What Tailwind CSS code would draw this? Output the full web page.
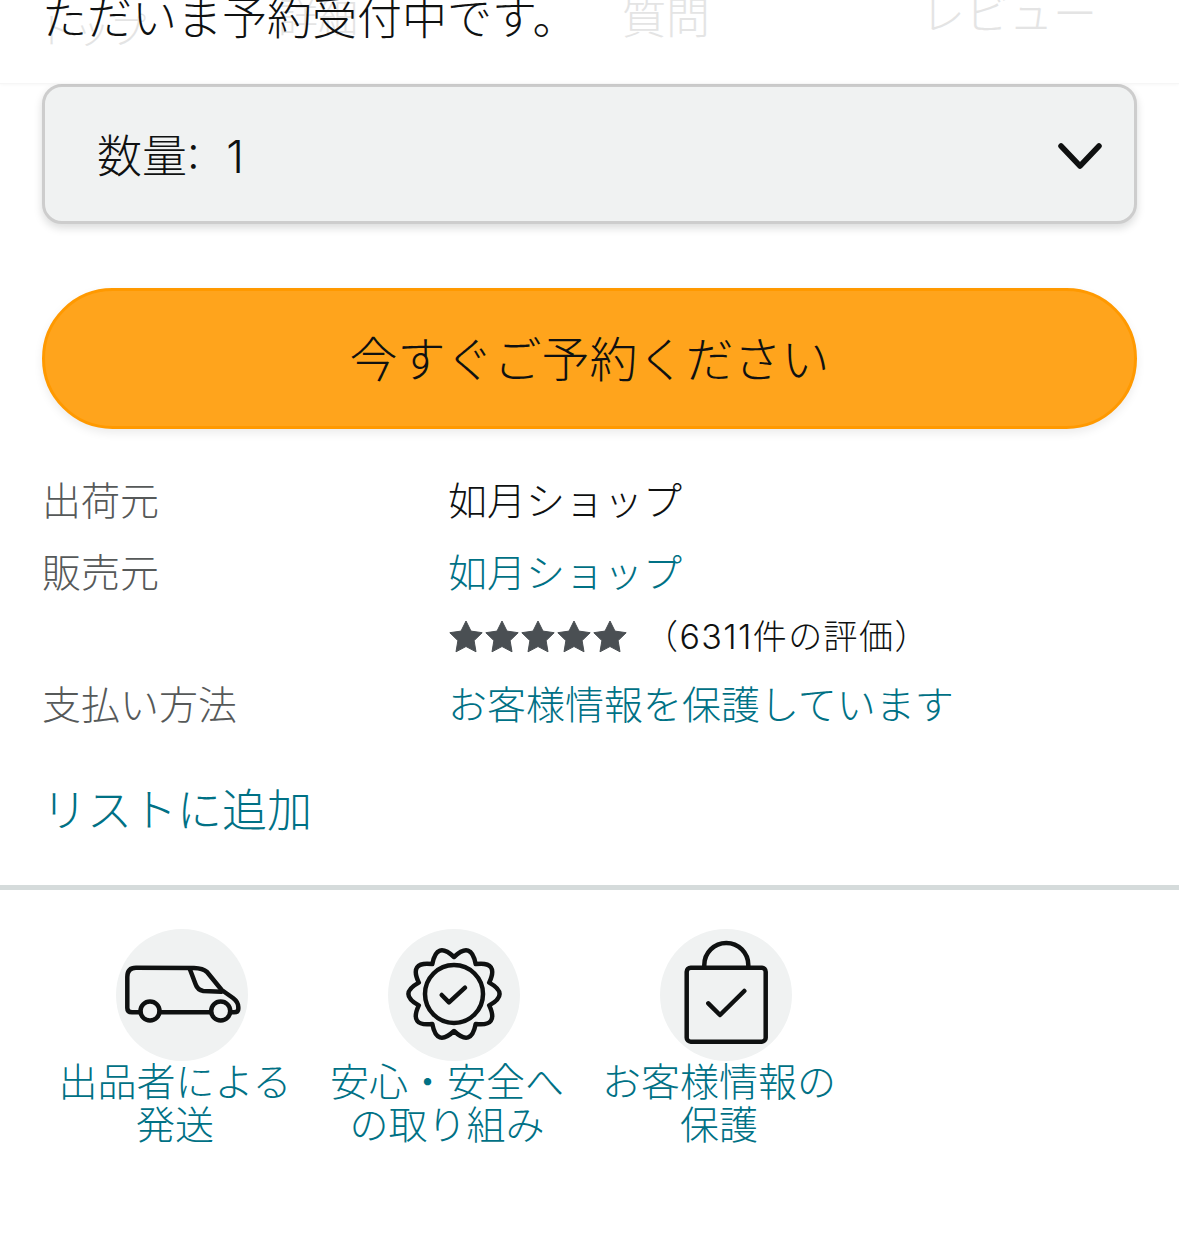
<!DOCTYPE html>
<html lang="ja">
<head>
  <meta charset="UTF-8">
  <meta name="viewport" content="width=device-width, initial-scale=1.0">
  <title>商品詳細</title>
  <script src="https://cdn.jsdelivr.net/npm/@tailwindcss/browser@4"></script>
</head>
<body class="bg-white font-['Noto_Sans_CJK_JP','Noto_Sans',sans-serif] font-light text-[#0f1111] h-[1241px] overflow-hidden">
  <!-- faded tab bar sitting behind the heading -->
  <div class="relative h-[84px] overflow-hidden border-b border-[#f6f6f6] shadow-[0_1px_3px_rgba(0,0,0,0.03)]">
    <div class="absolute inset-x-0 top-0 h-[80px] text-[#e4e4e4]">
      <span class="absolute left-[38px] top-[6px] text-[36px] leading-[44px]">トップ</span>
      <span class="absolute left-[278px] top-[-10px] text-[40px] leading-[50px]">詳細</span>
      <span class="absolute left-[622px] top-[-10px] text-[44px] leading-[50px]">質問</span>
      <span class="absolute left-[921px] top-[-14px] text-[44px] leading-[50px]">レビュー</span>
    </div>
    <h1 class="relative pl-[42px] mt-[-10px] text-[45px] leading-[52px] font-light">ただいま予約受付中です。</h1>
  </div>

  <main class="px-[42px]">
    <div class="h-[140px] flex items-center justify-between bg-[#f0f2f2] border-[3px] border-[#cdcdcd] rounded-[20px] shadow-[0_4px_8px_rgba(15,17,17,0.15)] pl-[52px] pr-[32px]">
      <span class="mt-[5px] text-[45px] leading-[52px] font-['Inter','Noto_Sans_CJK_JP',sans-serif] [word-spacing:14px]">数量: 1</span>
      <svg class="mt-[3px] w-[44px] h-[30px]" viewBox="0 0 44 30" fill="none" stroke="#0f1111" stroke-width="5.5" stroke-linecap="round" stroke-linejoin="round"><path d="M3 5 L22 25 L41 5"/></svg>
    </div>

    <button class="mt-[64px] w-full h-[141px] pb-[6px] bg-[#ffa41c] border-[3px] border-[#ff9900] rounded-full shadow-[0_4px_10px_rgba(15,17,17,0.08)] text-[48px] leading-[56px] font-light text-[#0f1111]">今すぐご予約ください</button>

    <dl class="mt-[39px] grid grid-cols-[406px_1fr] text-[39px] leading-[60px]">
      <dt class="text-[#565959]">出荷元</dt>
      <dd>如月ショップ</dd>
      <dt class="mt-[12px] text-[#565959]">販売元</dt>
      <dd class="mt-[12px] text-[#007185]">如月ショップ</dd>
      <dt></dt>
      <dd class="flex items-center h-[60px] mt-[7px]">
        <svg class="w-[180px] h-[34px]" viewBox="0 0 180 34" fill="#4a4f53" stroke="#4a4f53" stroke-width="1" stroke-linejoin="round">
          <path d="M18 1 L23 11.1 L34.2 12.7 L26.1 20.6 L28 31.8 L18 26.5 L8 31.8 L9.9 20.6 L1.8 12.7 L13 11.1Z"/>
          <path transform="translate(36 0)" d="M18 1 L23 11.1 L34.2 12.7 L26.1 20.6 L28 31.8 L18 26.5 L8 31.8 L9.9 20.6 L1.8 12.7 L13 11.1Z"/>
          <path transform="translate(72 0)" d="M18 1 L23 11.1 L34.2 12.7 L26.1 20.6 L28 31.8 L18 26.5 L8 31.8 L9.9 20.6 L1.8 12.7 L13 11.1Z"/>
          <path transform="translate(108 0)" d="M18 1 L23 11.1 L34.2 12.7 L26.1 20.6 L28 31.8 L18 26.5 L8 31.8 L9.9 20.6 L1.8 12.7 L13 11.1Z"/>
          <path transform="translate(144 0)" d="M18 1 L23 11.1 L34.2 12.7 L26.1 20.6 L28 31.8 L18 26.5 L8 31.8 L9.9 20.6 L1.8 12.7 L13 11.1Z"/>
        </svg>
        <span class="ml-[16px] text-[34px] leading-[40px] tracking-[1.4px] font-['Inter','Noto_Sans_CJK_JP',sans-serif]">（6311件の評価）</span>
      </dd>
      <dt class="mt-[5px] text-[#565959]">支払い方法</dt>
      <dd class="mt-[5px] text-[#007185]">お客様情報を保護しています</dd>
    </dl>

    <a class="block mt-[46px] text-[45px] leading-[60px] text-[#007185]">リストに追加</a>
  </main>

  <div class="mt-[47px] h-[5px] bg-[#d5dbdb]"></div>

  <section class="mt-[39px] pl-[39px] grid grid-cols-[272px_272px_272px] text-center text-[39px] leading-[43px] text-[#007185]">
    <a class="flex flex-col items-center">
      <span class="ml-[13px] w-[132px] h-[132px] rounded-full bg-[#f0f2f2]">
        <svg class="w-[132px] h-[132px]" viewBox="0 0 132 132" fill="none" stroke="#0f1111" stroke-width="4.5" stroke-linecap="round" stroke-linejoin="round">
          <path d="M24.5 83.3 H16 Q11.3 83.3 11.3 79 V48 Q11.3 38.7 20 38.7 L78 39 Q87 39.3 91 43 L105.7 61 L117 69 Q122.3 73 122.3 78 V80 Q122.3 83.3 118 83.3 H114.5 M95 83.3 H43.5"/>
          <path d="M74 40.5 L79.5 55 Q81.5 61 87.3 62 L105.7 62.7"/>
          <circle cx="34" cy="82" r="9.5"/>
          <circle cx="104.7" cy="82" r="9.5"/>
        </svg>
      </span>
      <span class="-mt-[3px]">出品者による<br>発送</span>
    </a>
    <a class="flex flex-col items-center">
      <span class="ml-[13px] w-[132px] h-[132px] rounded-full bg-[#f0f2f2]">
        <svg class="w-[132px] h-[132px]" viewBox="0 0 132 132" fill="none" stroke="#0f1111" stroke-width="4.5" stroke-linecap="round" stroke-linejoin="round">
          <path d="M101.2 53.6 Q111.3 32.1 87.7 35.1 Q83.3 11.7 66 28 Q48.7 11.7 44.3 35.1 Q20.7 32.1 30.8 53.6 Q10 65 30.8 76.4 Q20.7 97.9 44.3 94.9 Q48.7 118.3 66 102 Q83.3 118.3 87.7 94.9 Q111.3 97.9 101.2 76.4 Q122 65 101.2 53.6Z"/>
          <circle cx="66" cy="65" r="29"/>
          <path d="M53.7 66 L61 73.3 L77 58.7"/>
        </svg>
      </span>
      <span class="-mt-[3px]">安心・安全へ<br>の取り組み</span>
    </a>
    <a class="flex flex-col items-center">
      <span class="ml-[13px] w-[132px] h-[132px] rounded-full bg-[#f0f2f2]">
        <svg class="w-[132px] h-[132px]" viewBox="0 0 132 132" fill="none" stroke="#0f1111" stroke-width="4.5" stroke-linecap="round" stroke-linejoin="round">
          <rect x="26.7" y="38.7" width="79" height="74" rx="4"/>
          <path d="M44.3 37.7 V36 A22 22 0 0 1 88.3 36 V37.7"/>
          <path d="M48.3 74.3 L60 86 L84.3 62"/>
        </svg>
      </span>
      <span class="-mt-[3px]">お客様情報の<br>保護</span>
    </a>
  </section>
</body>
</html>
